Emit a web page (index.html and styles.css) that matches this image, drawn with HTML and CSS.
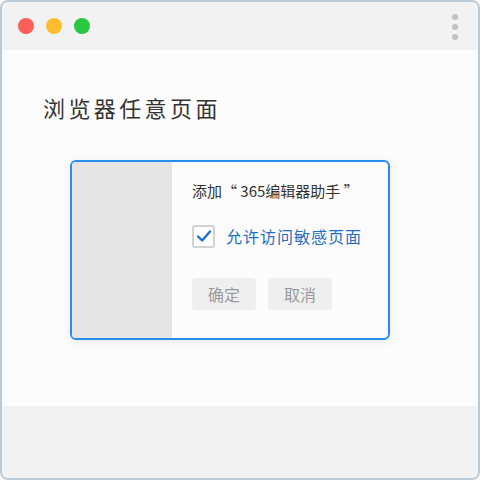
FILE: index.html
```html
<!DOCTYPE html>
<html lang="zh-CN">
<head>
  <meta charset="UTF-8" />
  <title>浏览器任意页面</title>
  <meta name="viewport" content="width=device-width, initial-scale=1" />
  <link rel="stylesheet" href="styles.css">
</head>
<body>
  <div class="window">
    <!-- Title bar -->
    <div class="titlebar">
      <div class="lights">
        <span class="light red"></span>
        <span class="light yellow"></span>
        <span class="light green"></span>
      </div>
      <div class="menu-dots">
        <span></span>
        <span></span>
        <span></span>
      </div>
    </div>

    <!-- Page content -->
    <div class="content">
      <h1 class="page-title">浏览器任意页面</h1>

      <div class="dialog">
        <div class="dialog-side"></div>
        <div class="dialog-body">
          <p class="dialog-title">添加“ 365编辑器助手 ”</p>

          <label class="check-row">
            <span class="checkbox">
              <svg width="18" height="18" viewBox="0 0 18 18">
                <path d="M3 9.5 L7.2 13.5 L15 4.5" fill="none" stroke="#1f6fc8" stroke-width="2.4" stroke-linecap="round" stroke-linejoin="round" />
              </svg>
            </span>
            <span class="check-label">允许访问敏感页面</span>
          </label>

          <div class="actions">
            <button class="btn">确定</button>
            <button class="btn">取消</button>
          </div>
        </div>
      </div>
    </div>

    <div class="footer"></div>
  </div>
</body>
</html>
```

FILE: styles.css
```css
* {
  box-sizing: border-box;
}
body {
  margin: 0;
  font-family: "Noto Sans CJK SC", "Noto Sans", sans-serif;
  background: #ffffff;
}
.window {
  width: 480px;
  height: 480px;
  border: 2px solid #b9cad6;
  border-radius: 8px;
  overflow: hidden;
  display: flex;
  flex-direction: column;
}
.titlebar {
  height: 48px;
  background: #f2f2f2;
  display: flex;
  align-items: center;
  justify-content: space-between;
  padding: 0 20px 0 16px;
}
.lights {
  display: flex;
  gap: 12px;
}
.light {
  width: 16px;
  height: 16px;
  border-radius: 50%;
}
.red {
  background: #ff5f57;
}
.yellow {
  background: #ffbd2e;
}
.green {
  background: #28c840;
}
.menu-dots {
  display: flex;
  flex-direction: column;
  gap: 4px;
  margin-top: 2px;
}
.menu-dots span {
  width: 6px;
  height: 6px;
  border-radius: 50%;
  background: #c2c2c2;
}
.content {
  height: 356px;
  background: #fcfcfc;
  padding: 40px 0 0 41px;
}
.page-title {
  margin: 0;
  font-size: 22px;
  font-weight: 400;
  line-height: 34px;
  letter-spacing: 3.4px;
  color: #333333;
}
.dialog {
  margin: 36px 0 0 27px;
  width: 320px;
  height: 180px;
  border: 2px solid #2b8cf0;
  border-radius: 6px;
  overflow: hidden;
  display: flex;
  background: #fcfcfc;
  box-shadow: 0 2px 8px rgba(0, 0, 0, 0.08);
}
.dialog-side {
  width: 100px;
  background: #e5e5e5;
}
.dialog-body {
  flex: 1;
  padding: 18px 0 0 20px;
}
.dialog-title {
  margin: 0;
  font-size: 15px;
  line-height: 22px;
  color: #333333;
}
.check-row {
  display: flex;
  align-items: center;
  gap: 11px;
  margin-top: 22px;
}
.checkbox {
  width: 23px;
  height: 23px;
  border: 2px solid #d2d2d2;
  border-radius: 3px;
  background: #ffffff;
  display: flex;
  align-items: center;
  justify-content: center;
}
.check-label {
  font-size: 16px;
  color: #1e6fc5;
  letter-spacing: 1px;
}
.actions {
  display: flex;
  gap: 12px;
  margin-top: 30px;
}
.btn {
  width: 64px;
  height: 32px;
  border: none;
  border-radius: 4px;
  background: #efefef;
  color: #9a9a9a;
  font-family: inherit;
  font-size: 16px;
  padding: 0;
}
.footer {
  flex: 1;
  background: #f2f2f2;
}
```
